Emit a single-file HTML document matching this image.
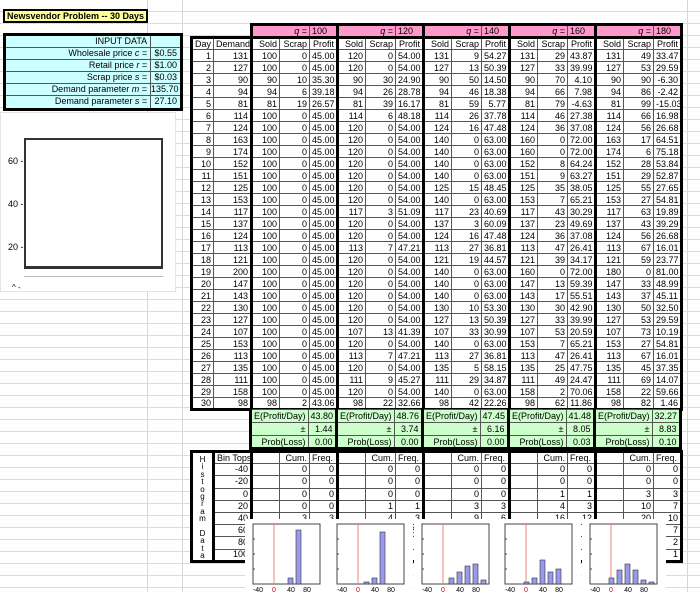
<!DOCTYPE html>
<html><head><meta charset="utf-8">
<style>
*{margin:0;padding:0;box-sizing:border-box}
body{width:700px;height:592px;overflow:hidden;background:#fff;font-family:"Liberation Sans",Arial,sans-serif;font-size:9px;color:#000;position:relative;
background-image:repeating-linear-gradient(to bottom,transparent 0,transparent 11px,#dcdcdc 11px,#dcdcdc 12px),linear-gradient(to right,transparent 147px,#d6d6d6 147px,#d6d6d6 148px,transparent 148px,transparent 182px,#d6d6d6 182px,#d6d6d6 183px,transparent 183px,transparent 687px,#d6d6d6 687px,#d6d6d6 688px,transparent 688px);}
.abs{position:absolute}
table{border-collapse:collapse;table-layout:fixed;position:absolute;left:190px}
td{border:1px solid #555;padding:0 2px;text-align:right;white-space:nowrap;overflow:hidden;height:12px;line-height:10px;font-size:9px;background:#fff}
td.d{border-left:3px solid #000}
td.m{border-right:3px solid #000}
td.s{border-left:3px solid #000}
td.p{border-right:3px solid #000}
tr.last td{border-bottom:3px solid #000}
tr.q td{background:#ff99cc;border-top:3px solid #000}
tr.q td.n{background:transparent;border:none}
tr.h td{border-top:3px solid #000}
tr.g td{background:#ccffcc;height:13px}
tr.g td.n{background:transparent;border:none;border-left:none;border-right:none}
table.hist td{height:11px;line-height:9px}
.c{text-align:center}
.l{text-align:left}
#title{left:3px;top:9px;width:145px;height:14px;background:#ffff99;border:2px solid #000;font-weight:bold;font-size:9px;line-height:10px;padding-left:2px}
#inp{left:3px;top:33px;width:180px;border:3px solid #000;background:#ccffff}
#inp div{display:flex;height:12px;line-height:11px;border-bottom:1px solid #555}
#inp div:last-child{border-bottom:none}
#inp span{display:block;text-align:right;padding-right:3px}
#inp span:first-child{width:146px;border-right:1px solid #555}
#inp span:last-child{width:29px}
</style></head><body>
<div id="title" class="abs">Newsvendor Problem -- 30 Days</div>
<div id="inp" class="abs">
<div><span>INPUT DATA</span><span></span></div>
<div><span>Wholesale price <i>c</i> =</span><span>$0.55</span></div>
<div><span>Retail price <i>r</i> =</span><span>$1.00</span></div>
<div><span>Scrap price <i>s</i> =</span><span>$0.03</span></div>
<div><span>Demand parameter <i>m</i> =</span><span>135.70</span></div>
<div><span>Demand parameter <i>s</i> =</span><span>27.10</span></div>
</div>

<div class="abs" style="left:0;top:112px;width:176px;height:180px;background:#fff;border:1px solid #e4e4e4"></div>
<div class="abs" style="left:24px;top:138px;width:139px;height:131px;border:2px solid #333;border-bottom-width:3px;background:#fff"></div>
<div class="abs" style="left:8px;top:156px;font-size:9px">60 -</div>
<div class="abs" style="left:8px;top:199px;font-size:9px">40 -</div>
<div class="abs" style="left:8px;top:242px;font-size:9px">20 -</div>
<div class="abs" style="left:24px;top:276px;width:139px;height:1px;background:#bbb"></div>
<div class="abs" style="left:12px;top:283px;font-size:8px">^ -</div>

<table style="top:23px;width:490px">
<colgroup><col style="width:22px"><col style="width:38px">
<col style="width:28px"><col style="width:30px"><col style="width:28px">
<col style="width:28px"><col style="width:30px"><col style="width:28px">
<col style="width:28px"><col style="width:30px"><col style="width:28px">
<col style="width:28px"><col style="width:30px"><col style="width:28px">
<col style="width:28px"><col style="width:30px"><col style="width:28px"></colgroup>
<tr class="q"><td class="n"></td><td class="n"></td>
<td class="s" colspan="2"><i>q</i> =</td><td class="p l">100</td>
<td class="s" colspan="2"><i>q</i> =</td><td class="p l">120</td>
<td class="s" colspan="2"><i>q</i> =</td><td class="p l">140</td>
<td class="s" colspan="2"><i>q</i> =</td><td class="p l">160</td>
<td class="s" colspan="2"><i>q</i> =</td><td class="p l">180</td></tr>
<tr class="h"><td class="d">Day</td><td class="m">Demand</td>
<td class="s">Sold</td><td>Scrap</td><td class="p">Profit</td>
<td class="s">Sold</td><td>Scrap</td><td class="p">Profit</td>
<td class="s">Sold</td><td>Scrap</td><td class="p">Profit</td>
<td class="s">Sold</td><td>Scrap</td><td class="p">Profit</td>
<td class="s">Sold</td><td>Scrap</td><td class="p">Profit</td></tr>
<tr><td class="d">1</td><td class="m">131</td><td class="s">100</td><td>0</td><td class="p">45.00</td><td class="s">120</td><td>0</td><td class="p">54.00</td><td class="s">131</td><td>9</td><td class="p">54.27</td><td class="s">131</td><td>29</td><td class="p">43.87</td><td class="s">131</td><td>49</td><td class="p">33.47</td></tr>
<tr><td class="d">2</td><td class="m">127</td><td class="s">100</td><td>0</td><td class="p">45.00</td><td class="s">120</td><td>0</td><td class="p">54.00</td><td class="s">127</td><td>13</td><td class="p">50.39</td><td class="s">127</td><td>33</td><td class="p">39.99</td><td class="s">127</td><td>53</td><td class="p">29.59</td></tr>
<tr><td class="d">3</td><td class="m">90</td><td class="s">90</td><td>10</td><td class="p">35.30</td><td class="s">90</td><td>30</td><td class="p">24.90</td><td class="s">90</td><td>50</td><td class="p">14.50</td><td class="s">90</td><td>70</td><td class="p">4.10</td><td class="s">90</td><td>90</td><td class="p">-6.30</td></tr>
<tr><td class="d">4</td><td class="m">94</td><td class="s">94</td><td>6</td><td class="p">39.18</td><td class="s">94</td><td>26</td><td class="p">28.78</td><td class="s">94</td><td>46</td><td class="p">18.38</td><td class="s">94</td><td>66</td><td class="p">7.98</td><td class="s">94</td><td>86</td><td class="p">-2.42</td></tr>
<tr><td class="d">5</td><td class="m">81</td><td class="s">81</td><td>19</td><td class="p">26.57</td><td class="s">81</td><td>39</td><td class="p">16.17</td><td class="s">81</td><td>59</td><td class="p">5.77</td><td class="s">81</td><td>79</td><td class="p">-4.63</td><td class="s">81</td><td>99</td><td class="p">-15.03</td></tr>
<tr><td class="d">6</td><td class="m">114</td><td class="s">100</td><td>0</td><td class="p">45.00</td><td class="s">114</td><td>6</td><td class="p">48.18</td><td class="s">114</td><td>26</td><td class="p">37.78</td><td class="s">114</td><td>46</td><td class="p">27.38</td><td class="s">114</td><td>66</td><td class="p">16.98</td></tr>
<tr><td class="d">7</td><td class="m">124</td><td class="s">100</td><td>0</td><td class="p">45.00</td><td class="s">120</td><td>0</td><td class="p">54.00</td><td class="s">124</td><td>16</td><td class="p">47.48</td><td class="s">124</td><td>36</td><td class="p">37.08</td><td class="s">124</td><td>56</td><td class="p">26.68</td></tr>
<tr><td class="d">8</td><td class="m">163</td><td class="s">100</td><td>0</td><td class="p">45.00</td><td class="s">120</td><td>0</td><td class="p">54.00</td><td class="s">140</td><td>0</td><td class="p">63.00</td><td class="s">160</td><td>0</td><td class="p">72.00</td><td class="s">163</td><td>17</td><td class="p">64.51</td></tr>
<tr><td class="d">9</td><td class="m">174</td><td class="s">100</td><td>0</td><td class="p">45.00</td><td class="s">120</td><td>0</td><td class="p">54.00</td><td class="s">140</td><td>0</td><td class="p">63.00</td><td class="s">160</td><td>0</td><td class="p">72.00</td><td class="s">174</td><td>6</td><td class="p">75.18</td></tr>
<tr><td class="d">10</td><td class="m">152</td><td class="s">100</td><td>0</td><td class="p">45.00</td><td class="s">120</td><td>0</td><td class="p">54.00</td><td class="s">140</td><td>0</td><td class="p">63.00</td><td class="s">152</td><td>8</td><td class="p">64.24</td><td class="s">152</td><td>28</td><td class="p">53.84</td></tr>
<tr><td class="d">11</td><td class="m">151</td><td class="s">100</td><td>0</td><td class="p">45.00</td><td class="s">120</td><td>0</td><td class="p">54.00</td><td class="s">140</td><td>0</td><td class="p">63.00</td><td class="s">151</td><td>9</td><td class="p">63.27</td><td class="s">151</td><td>29</td><td class="p">52.87</td></tr>
<tr><td class="d">12</td><td class="m">125</td><td class="s">100</td><td>0</td><td class="p">45.00</td><td class="s">120</td><td>0</td><td class="p">54.00</td><td class="s">125</td><td>15</td><td class="p">48.45</td><td class="s">125</td><td>35</td><td class="p">38.05</td><td class="s">125</td><td>55</td><td class="p">27.65</td></tr>
<tr><td class="d">13</td><td class="m">153</td><td class="s">100</td><td>0</td><td class="p">45.00</td><td class="s">120</td><td>0</td><td class="p">54.00</td><td class="s">140</td><td>0</td><td class="p">63.00</td><td class="s">153</td><td>7</td><td class="p">65.21</td><td class="s">153</td><td>27</td><td class="p">54.81</td></tr>
<tr><td class="d">14</td><td class="m">117</td><td class="s">100</td><td>0</td><td class="p">45.00</td><td class="s">117</td><td>3</td><td class="p">51.09</td><td class="s">117</td><td>23</td><td class="p">40.69</td><td class="s">117</td><td>43</td><td class="p">30.29</td><td class="s">117</td><td>63</td><td class="p">19.89</td></tr>
<tr><td class="d">15</td><td class="m">137</td><td class="s">100</td><td>0</td><td class="p">45.00</td><td class="s">120</td><td>0</td><td class="p">54.00</td><td class="s">137</td><td>3</td><td class="p">60.09</td><td class="s">137</td><td>23</td><td class="p">49.69</td><td class="s">137</td><td>43</td><td class="p">39.29</td></tr>
<tr><td class="d">16</td><td class="m">124</td><td class="s">100</td><td>0</td><td class="p">45.00</td><td class="s">120</td><td>0</td><td class="p">54.00</td><td class="s">124</td><td>16</td><td class="p">47.48</td><td class="s">124</td><td>36</td><td class="p">37.08</td><td class="s">124</td><td>56</td><td class="p">26.68</td></tr>
<tr><td class="d">17</td><td class="m">113</td><td class="s">100</td><td>0</td><td class="p">45.00</td><td class="s">113</td><td>7</td><td class="p">47.21</td><td class="s">113</td><td>27</td><td class="p">36.81</td><td class="s">113</td><td>47</td><td class="p">26.41</td><td class="s">113</td><td>67</td><td class="p">16.01</td></tr>
<tr><td class="d">18</td><td class="m">121</td><td class="s">100</td><td>0</td><td class="p">45.00</td><td class="s">120</td><td>0</td><td class="p">54.00</td><td class="s">121</td><td>19</td><td class="p">44.57</td><td class="s">121</td><td>39</td><td class="p">34.17</td><td class="s">121</td><td>59</td><td class="p">23.77</td></tr>
<tr><td class="d">19</td><td class="m">200</td><td class="s">100</td><td>0</td><td class="p">45.00</td><td class="s">120</td><td>0</td><td class="p">54.00</td><td class="s">140</td><td>0</td><td class="p">63.00</td><td class="s">160</td><td>0</td><td class="p">72.00</td><td class="s">180</td><td>0</td><td class="p">81.00</td></tr>
<tr><td class="d">20</td><td class="m">147</td><td class="s">100</td><td>0</td><td class="p">45.00</td><td class="s">120</td><td>0</td><td class="p">54.00</td><td class="s">140</td><td>0</td><td class="p">63.00</td><td class="s">147</td><td>13</td><td class="p">59.39</td><td class="s">147</td><td>33</td><td class="p">48.99</td></tr>
<tr><td class="d">21</td><td class="m">143</td><td class="s">100</td><td>0</td><td class="p">45.00</td><td class="s">120</td><td>0</td><td class="p">54.00</td><td class="s">140</td><td>0</td><td class="p">63.00</td><td class="s">143</td><td>17</td><td class="p">55.51</td><td class="s">143</td><td>37</td><td class="p">45.11</td></tr>
<tr><td class="d">22</td><td class="m">130</td><td class="s">100</td><td>0</td><td class="p">45.00</td><td class="s">120</td><td>0</td><td class="p">54.00</td><td class="s">130</td><td>10</td><td class="p">53.30</td><td class="s">130</td><td>30</td><td class="p">42.90</td><td class="s">130</td><td>50</td><td class="p">32.50</td></tr>
<tr><td class="d">23</td><td class="m">127</td><td class="s">100</td><td>0</td><td class="p">45.00</td><td class="s">120</td><td>0</td><td class="p">54.00</td><td class="s">127</td><td>13</td><td class="p">50.39</td><td class="s">127</td><td>33</td><td class="p">39.99</td><td class="s">127</td><td>53</td><td class="p">29.59</td></tr>
<tr><td class="d">24</td><td class="m">107</td><td class="s">100</td><td>0</td><td class="p">45.00</td><td class="s">107</td><td>13</td><td class="p">41.39</td><td class="s">107</td><td>33</td><td class="p">30.99</td><td class="s">107</td><td>53</td><td class="p">20.59</td><td class="s">107</td><td>73</td><td class="p">10.19</td></tr>
<tr><td class="d">25</td><td class="m">153</td><td class="s">100</td><td>0</td><td class="p">45.00</td><td class="s">120</td><td>0</td><td class="p">54.00</td><td class="s">140</td><td>0</td><td class="p">63.00</td><td class="s">153</td><td>7</td><td class="p">65.21</td><td class="s">153</td><td>27</td><td class="p">54.81</td></tr>
<tr><td class="d">26</td><td class="m">113</td><td class="s">100</td><td>0</td><td class="p">45.00</td><td class="s">113</td><td>7</td><td class="p">47.21</td><td class="s">113</td><td>27</td><td class="p">36.81</td><td class="s">113</td><td>47</td><td class="p">26.41</td><td class="s">113</td><td>67</td><td class="p">16.01</td></tr>
<tr><td class="d">27</td><td class="m">135</td><td class="s">100</td><td>0</td><td class="p">45.00</td><td class="s">120</td><td>0</td><td class="p">54.00</td><td class="s">135</td><td>5</td><td class="p">58.15</td><td class="s">135</td><td>25</td><td class="p">47.75</td><td class="s">135</td><td>45</td><td class="p">37.35</td></tr>
<tr><td class="d">28</td><td class="m">111</td><td class="s">100</td><td>0</td><td class="p">45.00</td><td class="s">111</td><td>9</td><td class="p">45.27</td><td class="s">111</td><td>29</td><td class="p">34.87</td><td class="s">111</td><td>49</td><td class="p">24.47</td><td class="s">111</td><td>69</td><td class="p">14.07</td></tr>
<tr><td class="d">29</td><td class="m">158</td><td class="s">100</td><td>0</td><td class="p">45.00</td><td class="s">120</td><td>0</td><td class="p">54.00</td><td class="s">140</td><td>0</td><td class="p">63.00</td><td class="s">158</td><td>2</td><td class="p">70.06</td><td class="s">158</td><td>22</td><td class="p">59.66</td></tr>
<tr class="last"><td class="d">30</td><td class="m">98</td><td class="s">98</td><td>2</td><td class="p">43.06</td><td class="s">98</td><td>22</td><td class="p">32.66</td><td class="s">98</td><td>42</td><td class="p">22.26</td><td class="s">98</td><td>62</td><td class="p">11.86</td><td class="s">98</td><td>82</td><td class="p">1.46</td></tr>
</table>

<table style="top:409px;width:490px">
<colgroup><col style="width:22px"><col style="width:38px">
<col style="width:58px"><col style="width:28px"><col style="width:58px"><col style="width:28px"><col style="width:58px"><col style="width:28px"><col style="width:58px"><col style="width:28px"><col style="width:58px"><col style="width:28px"></colgroup>
<tr class="g"><td class="n"></td><td class="n"></td><td class="s">E(Profit/Day)</td><td class="p">43.80</td><td class="s">E(Profit/Day)</td><td class="p">48.76</td><td class="s">E(Profit/Day)</td><td class="p">47.45</td><td class="s">E(Profit/Day)</td><td class="p">41.48</td><td class="s">E(Profit/Day)</td><td class="p">32.27</td></tr>
<tr class="g"><td class="n"></td><td class="n"></td><td class="s">±</td><td class="p">1.44</td><td class="s">±</td><td class="p">3.74</td><td class="s">±</td><td class="p">6.16</td><td class="s">±</td><td class="p">8.05</td><td class="s">±</td><td class="p">8.83</td></tr>
<tr class="g last"><td class="n"></td><td class="n"></td><td class="s">Prob(Loss)</td><td class="p">0.00</td><td class="s">Prob(Loss)</td><td class="p">0.00</td><td class="s">Prob(Loss)</td><td class="p">0.00</td><td class="s">Prob(Loss)</td><td class="p">0.03</td><td class="s">Prob(Loss)</td><td class="p">0.10</td></tr>
</table>

<table class="hist" style="top:450px;width:490px">
<colgroup><col style="width:22px"><col style="width:38px">
<col style="width:28px"><col style="width:30px"><col style="width:28px">
<col style="width:28px"><col style="width:30px"><col style="width:28px">
<col style="width:28px"><col style="width:30px"><col style="width:28px">
<col style="width:28px"><col style="width:30px"><col style="width:28px">
<col style="width:28px"><col style="width:30px"><col style="width:28px"></colgroup>
<tr class="h"><td class="d c m" rowspan="9" style="border-bottom:3px solid #000;line-height:7.4px;font-size:8px;vertical-align:top;padding-top:3px">H<br>i<br>s<br>t<br>o<br>g<br>r<br>a<br>m<br><br>D<br>a<br>t<br>a</td><td class="m l">Bin Tops</td>
<td class="s"></td><td>Cum.</td><td class="p l">Freq.</td><td class="s"></td><td>Cum.</td><td class="p l">Freq.</td><td class="s"></td><td>Cum.</td><td class="p l">Freq.</td><td class="s"></td><td>Cum.</td><td class="p l">Freq.</td><td class="s"></td><td>Cum.</td><td class="p l">Freq.</td></tr>
<tr><td class="m">-40</td><td class="s"></td><td>0</td><td class="p">0</td><td class="s"></td><td>0</td><td class="p">0</td><td class="s"></td><td>0</td><td class="p">0</td><td class="s"></td><td>0</td><td class="p">0</td><td class="s"></td><td>0</td><td class="p">0</td></tr>
<tr><td class="m">-20</td><td class="s"></td><td>0</td><td class="p">0</td><td class="s"></td><td>0</td><td class="p">0</td><td class="s"></td><td>0</td><td class="p">0</td><td class="s"></td><td>0</td><td class="p">0</td><td class="s"></td><td>0</td><td class="p">0</td></tr>
<tr><td class="m">0</td><td class="s"></td><td>0</td><td class="p">0</td><td class="s"></td><td>0</td><td class="p">0</td><td class="s"></td><td>0</td><td class="p">0</td><td class="s"></td><td>1</td><td class="p">1</td><td class="s"></td><td>3</td><td class="p">3</td></tr>
<tr><td class="m">20</td><td class="s"></td><td>0</td><td class="p">0</td><td class="s"></td><td>1</td><td class="p">1</td><td class="s"></td><td>3</td><td class="p">3</td><td class="s"></td><td>4</td><td class="p">3</td><td class="s"></td><td>10</td><td class="p">7</td></tr>
<tr><td class="m">40</td><td class="s"></td><td>3</td><td class="p">3</td><td class="s"></td><td>4</td><td class="p">3</td><td class="s"></td><td>9</td><td class="p">6</td><td class="s"></td><td>16</td><td class="p">12</td><td class="s"></td><td>20</td><td class="p">10</td></tr>
<tr><td class="m">60</td><td class="s"></td><td>30</td><td class="p">27</td><td class="s"></td><td>30</td><td class="p">26</td><td class="s"></td><td>18</td><td class="p">9</td><td class="s"></td><td>22</td><td class="p">6</td><td class="s"></td><td>27</td><td class="p">7</td></tr>
<tr><td class="m">80</td><td class="s"></td><td>30</td><td class="p">0</td><td class="s"></td><td>30</td><td class="p">0</td><td class="s"></td><td>28</td><td class="p">10</td><td class="s"></td><td>29</td><td class="p">7</td><td class="s"></td><td>29</td><td class="p">2</td></tr>
<tr class="last"><td class="m">100</td><td class="s"></td><td>30</td><td class="p">0</td><td class="s"></td><td>30</td><td class="p">0</td><td class="s"></td><td>30</td><td class="p">2</td><td class="s"></td><td>30</td><td class="p">1</td><td class="s"></td><td>30</td><td class="p">1</td></tr>
</table>

<svg class="abs" style="left:0;top:0" width="700" height="592" font-family="Liberation Sans, sans-serif" font-size="7">
<defs>
<g id="frame">
<rect x="-8" y="-5" width="84" height="80" fill="#fff"/>
<rect x="0" y="0" width="67" height="60" fill="#fff" stroke="#444" stroke-width="1"/>
<line x1="21" y1="0" x2="21" y2="60" stroke="#f08080" stroke-width="1"/>
<line x1="0" y1="15" x2="2" y2="15" stroke="#444"/><line x1="0" y1="30" x2="2" y2="30" stroke="#444"/><line x1="0" y1="45" x2="2" y2="45" stroke="#444"/>
<text x="5" y="68" text-anchor="middle">-40</text><text x="21" y="68" text-anchor="middle" fill="#c00">0</text><text x="38" y="68" text-anchor="middle">40</text><text x="54" y="68" text-anchor="middle">80</text>
</g>
</defs>
<g transform="translate(253,524)"><use href="#frame"/>
<rect x="35" y="54" width="5" height="6" fill="#9999ee" stroke="#333" stroke-width=".6"/>
<rect x="43" y="6" width="5" height="54" fill="#9999ee" stroke="#333" stroke-width=".6"/></g>
<g transform="translate(337,524)"><use href="#frame"/>
<rect x="27" y="58" width="5" height="2" fill="#9999ee" stroke="#333" stroke-width=".6"/>
<rect x="35" y="54" width="5" height="6" fill="#9999ee" stroke="#333" stroke-width=".6"/>
<rect x="43" y="8" width="5" height="52" fill="#9999ee" stroke="#333" stroke-width=".6"/></g>
<g transform="translate(422,524)"><use href="#frame"/>
<rect x="27" y="54" width="5" height="6" fill="#9999ee" stroke="#333" stroke-width=".6"/>
<rect x="35" y="48" width="5" height="12" fill="#9999ee" stroke="#333" stroke-width=".6"/>
<rect x="43" y="42" width="5" height="18" fill="#9999ee" stroke="#333" stroke-width=".6"/>
<rect x="51" y="40" width="5" height="20" fill="#9999ee" stroke="#333" stroke-width=".6"/>
<rect x="59" y="56" width="5" height="4" fill="#9999ee" stroke="#333" stroke-width=".6"/></g>
<g transform="translate(505,524)"><use href="#frame"/>
<rect x="19" y="58" width="5" height="2" fill="#9999ee" stroke="#333" stroke-width=".6"/>
<rect x="27" y="54" width="5" height="6" fill="#9999ee" stroke="#333" stroke-width=".6"/>
<rect x="35" y="36" width="5" height="24" fill="#9999ee" stroke="#333" stroke-width=".6"/>
<rect x="43" y="48" width="5" height="12" fill="#9999ee" stroke="#333" stroke-width=".6"/>
<rect x="51" y="45" width="5" height="15" fill="#9999ee" stroke="#333" stroke-width=".6"/></g>
<g transform="translate(590,524)"><use href="#frame"/>
<rect x="19" y="54" width="5" height="6" fill="#9999ee" stroke="#333" stroke-width=".6"/>
<rect x="27" y="46" width="5" height="14" fill="#9999ee" stroke="#333" stroke-width=".6"/>
<rect x="35" y="40" width="5" height="20" fill="#9999ee" stroke="#333" stroke-width=".6"/>
<rect x="43" y="46" width="5" height="14" fill="#9999ee" stroke="#333" stroke-width=".6"/>
<rect x="51" y="56" width="5" height="4" fill="#9999ee" stroke="#333" stroke-width=".6"/>
<rect x="59" y="58" width="5" height="2" fill="#9999ee" stroke="#333" stroke-width=".6"/></g>
</svg>
</body></html>
